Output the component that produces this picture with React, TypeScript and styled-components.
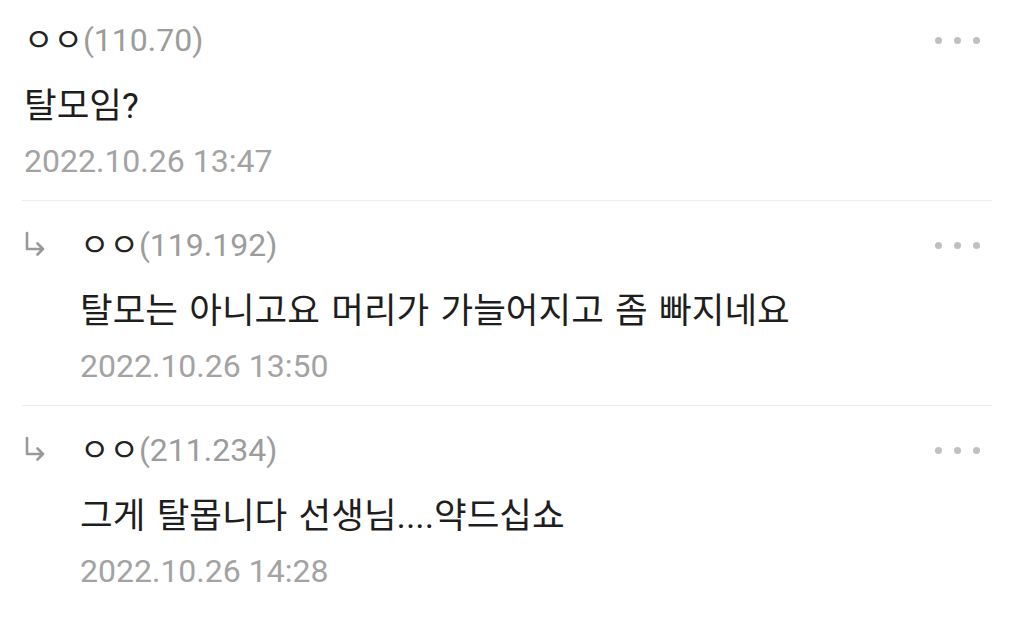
import styled, { createGlobalStyle } from "styled-components";

const GlobalStyle = createGlobalStyle`
  body {
    margin: 0;
    background: #ffffff;
    font-family: Roboto, "Noto Sans CJK KR", sans-serif;
  }
`;

interface CommentData {
  name: string;
  ip: string;
  text: string;
  date: string;
  reply?: boolean;
}

const comments: CommentData[] = [
  { name: "ㅇㅇ", ip: "(110.70)", text: "탈모임?", date: "2022.10.26 13:47" },
  {
    name: "ㅇㅇ",
    ip: "(119.192)",
    text: "탈모는 아니고요 머리가 가늘어지고 좀 빠지네요",
    date: "2022.10.26 13:50",
    reply: true,
  },
  {
    name: "ㅇㅇ",
    ip: "(211.234)",
    text: "그게 탈몹니다 선생님....약드십쇼",
    date: "2022.10.26 14:28",
    reply: true,
  },
];

const App: React.FC = () => {
  return (
    <>
      <GlobalStyle />
      <List>
        {comments.map((c, i) => (
          <Comment key={i} first={i === 0}>
            {c.reply && (
              <ArrowCol>
                <svg width="22" height="28" viewBox="0 0 22 28">
                  <path
                    d="M3 2 V18 H19 M13.5 12.5 L19 18 L13.5 23.5"
                    fill="none"
                    stroke="#9a9a9a"
                    strokeWidth="2.6"
                    strokeLinecap="round"
                    strokeLinejoin="round"
                  />
                </svg>
              </ArrowCol>
            )}
            <Body>
              <NameLine>
                <Nick>{c.name}</Nick>
                <Ip>{c.ip}</Ip>
              </NameLine>
              <Text>{c.text}</Text>
              <DateLine>{c.date}</DateLine>
            </Body>
            <More>
              <Dot />
              <Dot />
              <Dot />
            </More>
          </Comment>
        ))}
      </List>
    </>
  );
};

const List = styled.div`
  padding: 0 17px 0 22px;
`;

const Comment = styled.div<{ first?: boolean }>`
  display: flex;
  align-items: flex-start;
  padding: ${(p) => (p.first ? "20px" : "24px")} 12px 19px 2px;
  border-top: ${(p) => (p.first ? "none" : "1px solid #ececec")};
`;

const ArrowCol = styled.div`
  width: 56px;
  flex-shrink: 0;
  padding-top: 6px;
`;

const Body = styled.div`
  flex: 1;
  display: flex;
  flex-direction: column;
`;

const NameLine = styled.div`
  height: 40px;
  line-height: 40px;
  font-size: 32px;
  white-space: nowrap;
`;

const Nick = styled.span`
  color: #222222;
`;

const Ip = styled.span`
  color: #9c9c9c;
`;

const Text = styled.div`
  margin-top: 26px;
  height: 40px;
  line-height: 40px;
  font-size: 35.5px;
  word-spacing: 2.5px;
  color: #1e1e1e;
  white-space: nowrap;
`;

const DateLine = styled.div`
  margin-top: 15px;
  height: 40px;
  line-height: 40px;
  font-size: 32px;
  color: #a3a3a3;
`;

const More = styled.div`
  display: flex;
  gap: 12px;
  padding-top: 17px;
`;

const Dot = styled.span`
  width: 7px;
  height: 7px;
  border-radius: 50%;
  background: #c0c0c0;
`;

export default App;
